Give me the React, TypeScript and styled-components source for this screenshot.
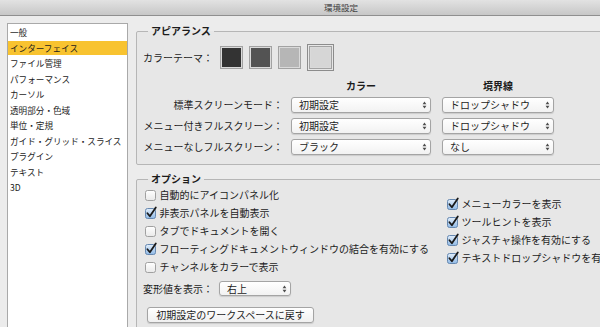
import React from "react";
import styled, { createGlobalStyle } from "styled-components";

const GlobalStyle = createGlobalStyle`
  html, body {
    margin: 0;
    padding: 0;
    background: #ececec;
  }
  body {
    font-family: "Noto Sans CJK JP", "Noto Sans", sans-serif;
    color: #1c1c1c;
  }
`;

const sideItems = [
  "一般",
  "インターフェイス",
  "ファイル管理",
  "パフォーマンス",
  "カーソル",
  "透明部分・色域",
  "単位・定規",
  "ガイド・グリッド・スライス",
  "プラグイン",
  "テキスト",
  "3D",
];

const themeColors = ["#333333", "#535353", "#b6b6b6", "#d6d6d6"];

const screenRows = [
  { label: "標準スクリーンモード：", color: "初期設定", border: "ドロップシャドウ" },
  { label: "メニュー付きフルスクリーン：", color: "初期設定", border: "ドロップシャドウ" },
  { label: "メニューなしフルスクリーン：", color: "ブラック", border: "なし" },
];

const leftOptions = [
  { text: "自動的にアイコンパネル化", checked: false },
  { text: "非表示パネルを自動表示", checked: true },
  { text: "タブでドキュメントを開く", checked: false },
  { text: "フローティングドキュメントウィンドウの結合を有効にする", checked: true },
  { text: "チャンネルをカラーで表示", checked: false },
];

const rightOptions = [
  { text: "メニューカラーを表示", checked: true },
  { text: "ツールヒントを表示", checked: true },
  { text: "ジャスチャ操作を有効にする", checked: true },
  { text: "テキストドロップシャドウを有効にする", checked: true },
];

const Window = styled.div`
  width: 600px;
  height: 327px;
  overflow: hidden;
  display: flex;
  flex-direction: column;
  background: #ececec;
`;

const TitleBar = styled.div`
  flex: none;
  height: 15px;
  border-bottom: 1px solid #8f8f8f;
  background: linear-gradient(#e2e2e2, #c7c7c7);
  display: flex;
  justify-content: center;
  padding-left: 82px;
  font-size: 8.5px;
  line-height: 15px;
  color: #3c3c3c;
`;

const Body = styled.div`
  flex: 1;
  min-height: 0;
  display: flex;
`;

const Sidebar = styled.div`
  flex: none;
  width: 121px;
  margin: 7px 0 0 7px;
  box-sizing: border-box;
  border: 1px solid #a9a9a9;
  border-bottom: none;
  background: #ffffff;
  padding-top: 1px;
`;

const SideItem = styled.div<{ $selected?: boolean }>`
  height: 14px;
  margin-bottom: 1.5px;
  padding-left: 2px;
  font-size: 8.6px;
  line-height: 14px;
  white-space: nowrap;
  background: ${(p) => (p.$selected ? "#f8c330" : "transparent")};
`;

const Main = styled.div`
  flex: none;
  width: 480px;
  margin-left: 8px;
  padding-top: 8px;
  display: flex;
  flex-direction: column;
`;

const Group = styled.fieldset<{ $gapTop?: number }>`
  margin: ${(p) => p.$gapTop ?? 0}px 0 0 0;
  padding: 0;
  min-width: 0;
  width: 480px;
  box-sizing: border-box;
  border: 1px solid #b6b6b6;
  border-radius: 2px;
  background: #e7e7e7;
`;

const Legend = styled.legend`
  margin-left: 11px;
  padding: 0 3px;
  font-size: 10px;
  line-height: 14px;
  font-weight: 600;
`;

const ThemeRow = styled.div`
  display: flex;
  align-items: center;
  height: 27px;
  margin-top: 6px;
  padding-left: 6px;
`;

const ThemeLabel = styled.div`
  width: 77px;
  font-size: 10px;
  line-height: 14px;
`;

const Swatches = styled.div`
  display: flex;
  align-items: center;
  gap: 6px;
`;

const Swatch = styled.div<{ $color: string; $selected?: boolean }>`
  width: 23px;
  height: 23px;
  box-sizing: border-box;
  background: ${(p) => p.$color};
  border: 1px solid #a2a2a2;
  box-shadow: inset 0 0 0 1px #dadada;
  margin-left: ${(p) => (p.$selected ? 2 : 0)}px;
  outline: ${(p) => (p.$selected ? "1px solid #8c8c8c" : "none")};
  outline-offset: 1px;
`;

const ScreenGrid = styled.div`
  display: grid;
  grid-template-columns: 146px 140px 115px;
  column-gap: 8px;
  row-gap: 5px;
  grid-auto-rows: 16px;
  grid-template-rows: 13px;
  margin-top: 8px;
  padding-bottom: 9px;
  align-items: center;
`;

const ColumnHead = styled.div<{ $w: number }>`
  width: ${(p) => p.$w}px;
  justify-self: end;
  text-align: center;
  font-size: 10px;
  line-height: 13px;
  font-weight: 600;
`;

const RowLabel = styled.div`
  text-align: right;
  font-size: 10px;
  line-height: 16px;
  white-space: nowrap;
`;

const SelectBox = styled.div<{ $w: number; $h?: number }>`
  width: ${(p) => p.$w}px;
  height: ${(p) => p.$h ?? 16}px;
  justify-self: end;
  box-sizing: border-box;
  border: 1px solid #a4a4a4;
  border-radius: 3px;
  background: linear-gradient(#ffffff, #f2f2f2);
  box-shadow: 0 1px 1px rgba(0, 0, 0, 0.12);
  display: flex;
  align-items: center;
  justify-content: space-between;
  padding: 0 3px 0 7px;
  font-size: 10px;
  line-height: 1;
  white-space: nowrap;
`;

const OptionGrid = styled.div`
  display: grid;
  grid-template-columns: 302px auto;
  padding-left: 8px;
`;

const OptionColumn = styled.div<{ $offset?: number }>`
  display: flex;
  flex-direction: column;
  padding-top: ${(p) => p.$offset ?? 0}px;
`;

const CheckRow = styled.label`
  display: flex;
  align-items: center;
  gap: 2.5px;
  height: 18px;
  font-size: 10px;
  line-height: 18px;
  white-space: nowrap;
`;

const TransformRow = styled.div`
  display: flex;
  align-items: center;
  height: 15px;
  margin-top: 5px;
  padding-left: 6px;
`;

const TransformLabel = styled.div`
  width: 76px;
  font-size: 10px;
  line-height: 15px;
`;

const PushButton = styled.button`
  width: 167px;
  height: 16px;
  margin: 11px 0 24px 10px;
  padding: 0;
  box-sizing: border-box;
  border: 1px solid #a4a4a4;
  border-radius: 3px;
  background: linear-gradient(#ffffff, #f0f0f0);
  box-shadow: 0 1px 1px rgba(0, 0, 0, 0.12);
  font-family: inherit;
  font-size: 10px;
  line-height: 14px;
  color: #1c1c1c;
`;

function Arrows() {
  return (
    <svg width="5" height="8" viewBox="0 0 5 8">
      <path d="M0.6 3.3 L2.5 0.6 L4.4 3.3 Z" fill="#4d4d4d" />
      <path d="M0.6 4.7 L2.5 7.4 L4.4 4.7 Z" fill="#4d4d4d" />
    </svg>
  );
}

function Select({ value, w, h }: { value: string; w: number; h?: number }) {
  return (
    <SelectBox $w={w} $h={h}>
      <span>{value}</span>
      <Arrows />
    </SelectBox>
  );
}

function Checkbox({ checked }: { checked: boolean }) {
  return (
    <svg width="12" height="12" viewBox="0 0 12 12" style={{ overflow: "visible", flex: "none" }}>
      <defs>
        <linearGradient id="cbOn" x1="0" y1="0" x2="0" y2="1">
          <stop offset="0" stopColor="#e2eefa" />
          <stop offset="1" stopColor="#8fb9e6" />
        </linearGradient>
        <linearGradient id="cbOff" x1="0" y1="0" x2="0" y2="1">
          <stop offset="0" stopColor="#ffffff" />
          <stop offset="1" stopColor="#e9e9e9" />
        </linearGradient>
      </defs>
      <rect
        x="0.5"
        y="1.5"
        width="10"
        height="10"
        rx="2"
        fill={checked ? "url(#cbOn)" : "url(#cbOff)"}
        stroke={checked ? "#6688b0" : "#a0a0a0"}
      />
      {checked && (
        <path
          d="M2.4 6.2 L4.9 9.3 L10.8 0.4"
          fill="none"
          stroke="#1a1a1a"
          strokeWidth="1.8"
          strokeLinecap="round"
          strokeLinejoin="round"
        />
      )}
    </svg>
  );
}

export default function App() {
  return (
    <>
      <GlobalStyle />
      <Window>
        <TitleBar>環境設定</TitleBar>
        <Body>
          <Sidebar>
            {sideItems.map((item, i) => (
              <SideItem key={item} $selected={i === 1}>
                {item}
              </SideItem>
            ))}
          </Sidebar>
          <Main>
            <Group>
              <Legend>アピアランス</Legend>
              <ThemeRow>
                <ThemeLabel>カラーテーマ：</ThemeLabel>
                <Swatches>
                  {themeColors.map((c, i) => (
                    <Swatch key={c} $color={c} $selected={i === 3} />
                  ))}
                </Swatches>
              </ThemeRow>
              <ScreenGrid>
                <div />
                <ColumnHead $w={140}>カラー</ColumnHead>
                <ColumnHead $w={112}>境界線</ColumnHead>
                {screenRows.map((r) => (
                  <React.Fragment key={r.label}>
                    <RowLabel>{r.label}</RowLabel>
                    <Select value={r.color} w={140} />
                    <Select value={r.border} w={112} />
                  </React.Fragment>
                ))}
              </ScreenGrid>
            </Group>
            <Group $gapTop={7}>
              <Legend>オプション</Legend>
              <OptionGrid>
                <OptionColumn>
                  {leftOptions.map((o) => (
                    <CheckRow key={o.text}>
                      <Checkbox checked={o.checked} />
                      {o.text}
                    </CheckRow>
                  ))}
                </OptionColumn>
                <OptionColumn $offset={9}>
                  {rightOptions.map((o) => (
                    <CheckRow key={o.text}>
                      <Checkbox checked={o.checked} />
                      {o.text}
                    </CheckRow>
                  ))}
                </OptionColumn>
              </OptionGrid>
              <TransformRow>
                <TransformLabel>変形値を表示：</TransformLabel>
                <Select value="右上" w={72} h={15} />
              </TransformRow>
              <PushButton>初期設定のワークスペースに戻す</PushButton>
            </Group>
          </Main>
        </Body>
      </Window>
    </>
  );
}
